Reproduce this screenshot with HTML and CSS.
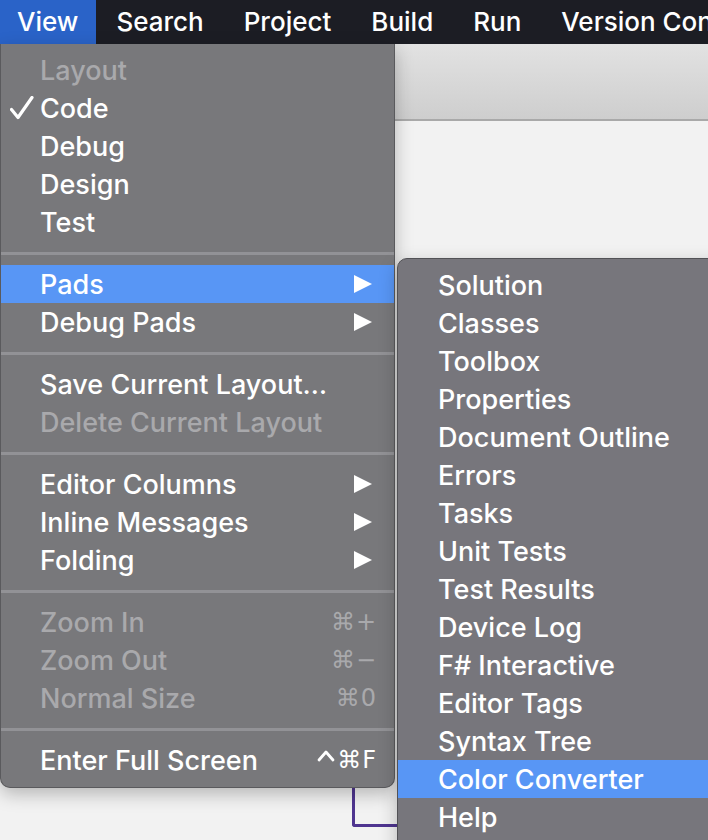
FILE: index.html
```html
<!DOCTYPE html>
<html>
<head>
<meta charset="utf-8">
<link rel="stylesheet" href="styles.css">
</head>
<body>
<div class="screen">
  <div class="menubar">
    <div class="mb-item active">View</div>
    <div class="mb-item">Search</div>
    <div class="mb-item">Project</div>
    <div class="mb-item">Build</div>
    <div class="mb-item">Run</div>
    <div class="mb-item">Version Control</div>
  </div>
  <div class="workspace">
    <div class="toolbar"></div>
    <div class="canvas">
      <div class="connector"></div>
    </div>

    <div class="menu main-menu">
      <div class="row disabled"><span class="label">Layout</span></div>
      <div class="row"><span class="check"><svg width="24" height="24" viewBox="0 0 24 24"><path d="M1.5 13.5 L8 21.5 L22 1.5" fill="none" stroke="#fff" stroke-width="3.2" stroke-linecap="round" stroke-linejoin="round"/></svg></span><span class="label">Code</span></div>
      <div class="row"><span class="label">Debug</span></div>
      <div class="row"><span class="label">Design</span></div>
      <div class="row"><span class="label">Test</span></div>
      <div class="sep"></div>
      <div class="row selected"><span class="label">Pads</span><span class="arrow"></span></div>
      <div class="row"><span class="label">Debug Pads</span><span class="arrow"></span></div>
      <div class="sep"></div>
      <div class="row"><span class="label">Save Current Layout…</span></div>
      <div class="row disabled"><span class="label">Delete Current Layout</span></div>
      <div class="sep"></div>
      <div class="row"><span class="label">Editor Columns</span><span class="arrow"></span></div>
      <div class="row"><span class="label">Inline Messages</span><span class="arrow"></span></div>
      <div class="row"><span class="label">Folding</span><span class="arrow"></span></div>
      <div class="sep"></div>
      <div class="row disabled"><span class="label">Zoom In</span><span class="key">⌘+</span></div>
      <div class="row disabled"><span class="label">Zoom Out</span><span class="key">⌘−</span></div>
      <div class="row disabled"><span class="label">Normal Size</span><span class="key">⌘0</span></div>
      <div class="sep"></div>
      <div class="row"><span class="label">Enter Full Screen</span><span class="key"><svg class="caret" width="18" height="14" viewBox="0 0 18 14"><path d="M2 11 L9 3 L16 11" fill="none" stroke="#fff" stroke-width="2.8" stroke-linecap="round" stroke-linejoin="round"/></svg>⌘F</span></div>
    </div>

    <div class="menu sub-menu">
      <div class="row"><span class="label">Solution</span></div>
      <div class="row"><span class="label">Classes</span></div>
      <div class="row"><span class="label">Toolbox</span></div>
      <div class="row"><span class="label">Properties</span></div>
      <div class="row"><span class="label">Document Outline</span></div>
      <div class="row"><span class="label">Errors</span></div>
      <div class="row"><span class="label">Tasks</span></div>
      <div class="row"><span class="label">Unit Tests</span></div>
      <div class="row"><span class="label">Test Results</span></div>
      <div class="row"><span class="label">Device Log</span></div>
      <div class="row"><span class="label">F# Interactive</span></div>
      <div class="row"><span class="label">Editor Tags</span></div>
      <div class="row"><span class="label">Syntax Tree</span></div>
      <div class="row selected"><span class="label">Color Converter</span></div>
      <div class="row"><span class="label">Help</span></div>
    </div>
  </div>
</div>
</body>
</html>
```
FILE: styles.css
```css
* { box-sizing: border-box; }
html, body { margin: 0; padding: 0; }
body {
  width: 708px;
  height: 840px;
  overflow: hidden;
  font-family: Inter, "Noto Sans", sans-serif;
  -webkit-font-smoothing: antialiased;
}
.screen {
  width: 708px;
  height: 840px;
  display: flex;
  flex-direction: column;
}
.menubar {
  height: 44px;
  flex: none;
  background: #1c1d24;
  display: flex;
  align-items: stretch;
  white-space: nowrap;
  overflow: hidden;
}
.mb-item {
  color: #fff;
  font-size: 26px;
  font-weight: 500;
  line-height: 44px;
  padding: 0 20px;
}
.mb-item.active {
  background: #2a63c8;
  padding: 0 18px 0 17px;
}
.workspace {
  position: relative;
  flex: 1;
  display: flex;
  flex-direction: column;
}
.toolbar {
  height: 77px;
  flex: none;
  background: linear-gradient(#e2e2e2, #cecece);
  border-bottom: 2px solid #a9a9a9;
}
.canvas {
  flex: 1;
  background: #f2f2f2;
  position: relative;
}
.connector {
  position: absolute;
  left: 352px;
  top: 600px;
  width: 60px;
  height: 106px;
  border-left: 3px solid #4f3590;
  border-bottom: 3px solid #4f3590;
  border-bottom-left-radius: 3px;
}
.menu {
  position: absolute;
  background: #78787b;
  color: #fff;
  font-size: 27px;
  font-weight: 500;
  box-shadow: 0 6px 18px rgba(0,0,0,0.25);
}
.main-menu {
  left: 0;
  top: 0;
  width: 395px;
  padding: 7px 0 8px;
  border-radius: 0 0 10px 10px;
  border: 1px solid #5a5a5d;
  border-top: none;
}
.sub-menu {
  left: 397px;
  top: 214px;
  width: 330px;
  padding: 7px 0 40px;
  border-radius: 10px 0 0 10px;
  border: 1px solid #525256;
  background: #77767c;
}
.row {
  height: 38px;
  display: flex;
  align-items: center;
  position: relative;
  padding: 0 20px 0 39px;
  white-space: nowrap;
}
.sub-menu .row { padding-left: 40px; }
.row.selected { background: #5896f5; }
.row.disabled { color: #a9a9ac; }
.label { flex: 1; }
.check {
  position: absolute;
  left: 9px;
  top: 7px;
  width: 24px;
  height: 24px;
}
.check svg { display: block; }
.arrow {
  width: 0;
  height: 0;
  border-left: 18px solid #fff;
  border-top: 9px solid transparent;
  border-bottom: 9px solid transparent;
  margin-right: 2px;
}
.key {
  font-family: "DejaVu Sans", sans-serif;
  font-size: 24px;
  font-weight: 400;
  letter-spacing: 1px;
  margin-right: -3px;
  display: flex;
  align-items: center;
}
.caret {
  display: block;
  margin-right: 2px;
  margin-top: -8px;
}
.sep {
  height: 24px;
  display: flex;
  align-items: center;
}
.sep::before {
  content: "";
  display: block;
  width: 100%;
  height: 3px;
  background: #929296;
}
```
